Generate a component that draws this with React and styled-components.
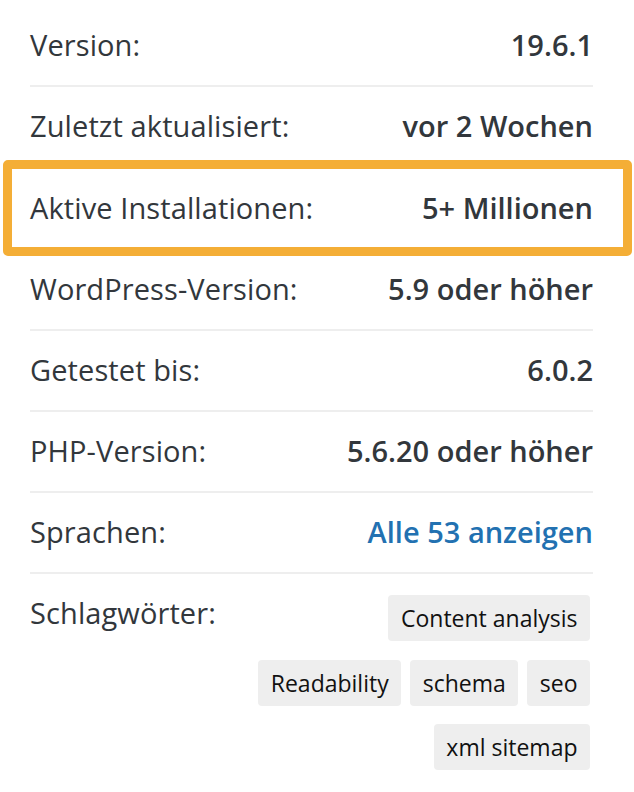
import React from 'react';
import styled, { createGlobalStyle } from 'styled-components';

const GlobalStyle = createGlobalStyle`
  html, body {
    margin: 0;
    padding: 0;
    background: #fff;
  }

  body {
    font-family: "Open Sans", "Noto Sans", sans-serif;
    color: #32373c;
  }
`;

const meta = [
  { label: 'Version:', value: '19.6.1' },
  { label: 'Zuletzt aktualisiert:', value: 'vor 2 Wochen' },
  { label: 'Aktive Installationen:', value: '5+ Millionen', highlight: true },
  { label: 'WordPress-Version:', value: '5.9 oder höher' },
  { label: 'Getestet bis:', value: '6.0.2' },
  { label: 'PHP-Version:', value: '5.6.20 oder höher' },
  { label: 'Sprachen:', value: 'Alle 53 anzeigen', link: true },
];

const tags = ['Content analysis', 'Readability', 'schema', 'seo', 'xml sitemap'];

const Wrapper = styled.div`
  padding: 6px 41px 0 30px;
`;

const MetaList = styled.ul`
  list-style: none;
  margin: 0;
  padding: 0;
`;

const MetaRow = styled.li`
  position: relative;
  display: flex;
  justify-content: space-between;
  align-items: ${({ $top }) => ($top ? 'flex-start' : 'center')};
  padding: 17.2px 0;
  border-bottom: ${({ $last }) => ($last ? 'none' : '2px solid #eee')};
  font-size: 29px;
  line-height: 44.8px;
`;

const Label = styled.span`
  font-weight: 400;
  white-space: nowrap;
  letter-spacing: 0.1px;
`;

const Value = styled.span`
  font-weight: 600;
  text-align: right;
`;

const ValueLink = styled.a`
  font-weight: 600;
  color: #2271b1;
  text-decoration: none;
`;

const Highlight = styled.div`
  position: absolute;
  top: -8px;
  bottom: -8px;
  left: -27px;
  right: -39px;
  border: 9px solid #f4ae36;
  border-radius: 5px;
  pointer-events: none;
`;

const TagList = styled.div`
  display: flex;
  flex-wrap: wrap;
  justify-content: flex-end;
  column-gap: 9px;
  row-gap: 18.5px;
  max-width: 345px;
  margin-top: 4px;
  padding-right: 3px;
`;

const Tag = styled.a`
  display: inline-block;
  padding: 5px 12.5px;
  background: #eee;
  border-radius: 4px;
  color: #111;
  font-size: 23px;
  line-height: 36px;
  font-weight: 400;
  text-decoration: none;
  white-space: nowrap;
`;

export default function App() {
  return (
    <>
      <GlobalStyle />
      <Wrapper>
        <MetaList>
          {meta.map((item) => (
            <MetaRow key={item.label}>
              <Label>{item.label}</Label>
              {item.link ? (
                <ValueLink href="#">{item.value}</ValueLink>
              ) : (
                <Value>{item.value}</Value>
              )}
              {item.highlight && <Highlight />}
            </MetaRow>
          ))}
          <MetaRow $top $last>
            <Label>Schlagwörter:</Label>
            <TagList>
              {tags.map((tag) => (
                <Tag key={tag} href="#">{tag}</Tag>
              ))}
            </TagList>
          </MetaRow>
        </MetaList>
      </Wrapper>
    </>
  );
}
